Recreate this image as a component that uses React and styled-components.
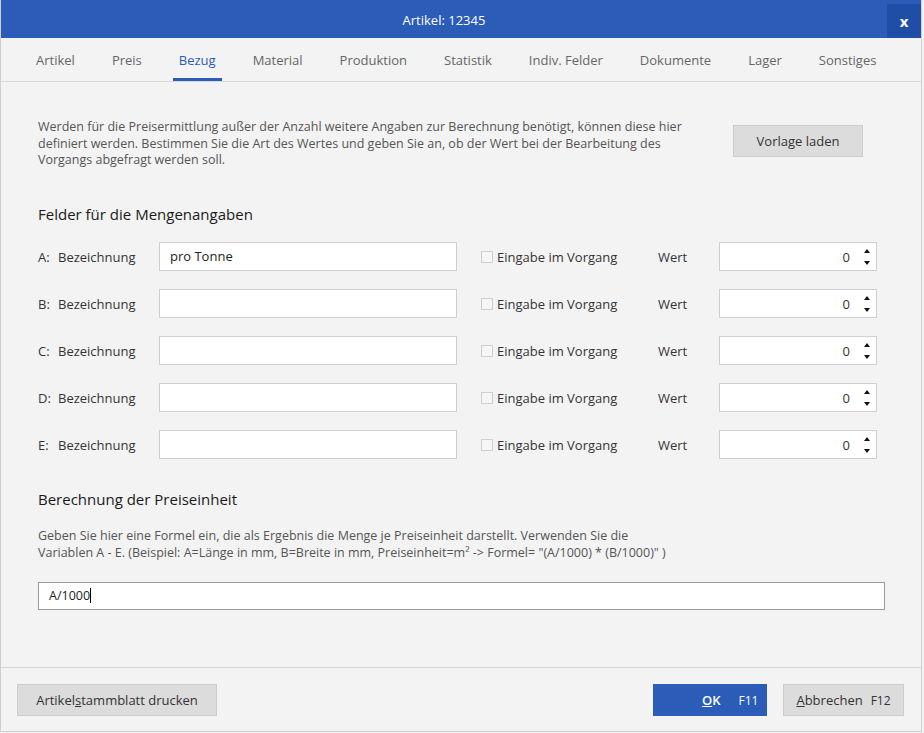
import React from 'react'
import styled, { createGlobalStyle } from 'styled-components'

const GlobalStyle = createGlobalStyle`
    body {
        margin: 0;
        background: #f4f4f4;
        font-family: 'Open Sans', 'Noto Sans', sans-serif;
    }
`;

const tabs = ['Artikel', 'Preis', 'Bezug', 'Material', 'Produktion', 'Statistik', 'Indiv. Felder', 'Dokumente', 'Lager', 'Sonstiges']
const rows = ['A', 'B', 'C', 'D', 'E']

const App = () => {
    return (
        <>
            <GlobalStyle />
            <Dialog>
                <TitleBar>
                    <Title>Artikel: 12345</Title>
                    <CloseButton>x</CloseButton>
                </TitleBar>

                <TabBar>
                    {tabs.map(t => (
                        <Tab key={t} $active={t === 'Bezug'}>{t}</Tab>
                    ))}
                </TabBar>

                <Content>
                    <Intro>
                        <Text>
                            Werden für die Preisermittlung außer der Anzahl weitere Angaben zur Berechnung benötigt, können diese hier
                            definiert werden. Bestimmen Sie die Art des Wertes und geben Sie an, ob der Wert bei der Bearbeitung des
                            Vorgangs abgefragt werden soll.
                        </Text>
                        <GrayButton $width={130}>Vorlage laden</GrayButton>
                    </Intro>

                    <Heading $top={35}>Felder für die Mengenangaben</Heading>

                    <Rows>
                        {rows.map((r, i) => (
                            <Row key={r}>
                                <FieldLabel><span>{r}:</span>Bezeichnung</FieldLabel>
                                <TextBox>{i === 0 ? 'pro Tonne' : ''}</TextBox>
                                <span />
                                <CheckLabel><Check />Eingabe im Vorgang</CheckLabel>
                                <FieldLabel>Wert</FieldLabel>
                                <NumberBox>
                                    <span>0</span>
                                    <Spinner>
                                        <Arrow $up />
                                        <Arrow />
                                    </Spinner>
                                </NumberBox>
                            </Row>
                        ))}
                    </Rows>

                    <Heading $top={30}>Berechnung der Preiseinheit</Heading>
                    <Text $top={19}>
                        Geben Sie hier eine Formel ein, die als Ergebnis die Menge je Preiseinheit darstellt. Verwenden Sie die<br />
                        Variablen A - E. (Beispiel: A=Länge in mm, B=Breite in mm, Preiseinheit=m² -&gt; Formel= "(A/1000) * (B/1000)" )
                    </Text>
                    <FormulaBox>A/1000<Caret /></FormulaBox>
                </Content>

                <Footer>
                    <GrayButton $width={200}>Artikel<u>s</u>tammblatt drucken</GrayButton>
                    <FooterRight>
                        <PrimaryButton><u>O</u>K<Key $gap={18}>F11</Key></PrimaryButton>
                        <GrayButton $width={121}><u>A</u>bbrechen<Key $gap={8}>F12</Key></GrayButton>
                    </FooterRight>
                </Footer>
            </Dialog>
        </>
    )
}

const Dialog = styled.div`
    width: 920px;
    height: 731px;
    display: flex;
    flex-direction: column;
    background: #f3f3f3;
    border: 1px solid #cfcfcf;
    border-top: none;
`;

const TitleBar = styled.div`
    height: 38px;
    display: flex;
    background: #2a5cb8;
    color: #fff;
`;

const Title = styled.div`
    flex: 1;
    text-align: center;
    line-height: 40px;
    font-size: 13px;
`;

const CloseButton = styled.div`
    width: 34px;
    margin-top: 4px;
    background: #1e4ea6;
    text-align: center;
    line-height: 34px;
    font-size: 15px;
    font-weight: 700;
`;

const TabBar = styled.div`
    height: 43px;
    display: flex;
    gap: 37px;
    padding-left: 35px;
    border-bottom: 1px solid #d9d9d9;
`;

const Tab = styled.div`
    display: flex;
    align-items: center;
    padding-top: 1px;
    font-size: 13px;
    color: ${p => p.$active ? '#2a5cb8' : '#666'};
    box-shadow: ${p => p.$active ? 'inset 0 -3px 0 #2a5cb8' : 'none'};
    margin: ${p => p.$active ? '0 -6px' : '0'};
    padding-left: ${p => p.$active ? '6px' : '0'};
    padding-right: ${p => p.$active ? '6px' : '0'};
`;

const Content = styled.div`
    flex: 1;
    padding: 37px 37px 0 37px;
`;

const Intro = styled.div`
    display: flex;
    align-items: flex-start;
    justify-content: space-between;
    padding-right: 21px;

    & > button {
        margin-top: 6px;
    }
`;

const Text = styled.div`
    margin-top: ${p => p.$top || 0}px;
    font-size: 12.5px;
    line-height: 16.7px;
    color: #555;
    max-width: 670px;
`;

const Heading = styled.div`
    margin-top: ${p => p.$top}px;
    font-size: 15px;
    line-height: 20px;
    color: #1a1a1a;
`;

const Rows = styled.div`
    margin-top: 18px;
    display: flex;
    flex-direction: column;
    gap: 18px;
`;

const Row = styled.div`
    display: grid;
    grid-template-columns: 121px 298px 24px 177px 61px 158px;
    height: 29px;
    align-items: center;
`;

const FieldLabel = styled.div`
    font-size: 13px;
    color: #333;

    span {
        display: inline-block;
        width: 20px;
    }
`;

const TextBox = styled.div`
    height: 27px;
    border: 1px solid #cfcfcf;
    background: #fff;
    padding-left: 10px;
    font-size: 13px;
    line-height: 27px;
    color: #222;
`;

const CheckLabel = styled.div`
    display: flex;
    align-items: center;
    gap: 4px;
    font-size: 13px;
    color: #333;
`;

const Check = styled.span`
    width: 10px;
    height: 10px;
    border: 1px solid #cfcfcf;
    background: #f6f6f6;
`;

const NumberBox = styled.div`
    height: 27px;
    border: 1px solid #cfcfcf;
    background: #fff;
    display: flex;
    align-items: center;
    justify-content: flex-end;
    padding-right: 6px;
    gap: 14px;
    font-size: 13px;
    color: #333;
`;

const Spinner = styled.div`
    display: flex;
    flex-direction: column;
    gap: 8px;
`;

const Arrow = styled.span`
    width: 0;
    height: 0;
    border-left: 3px solid transparent;
    border-right: 3px solid transparent;
    border-bottom: ${p => p.$up ? '4px solid #111' : 'none'};
    border-top: ${p => p.$up ? 'none' : '4px solid #111'};
`;

const FormulaBox = styled.div`
    margin-top: 20px;
    width: 835px;
    height: 26px;
    border: 1px solid #9a9a9a;
    background: #fff;
    padding-left: 10px;
    display: flex;
    align-items: center;
    font-size: 12.5px;
    color: #222;
`;

const Caret = styled.span`
    width: 1px;
    height: 15px;
    background: #000;
`;

const Footer = styled.div`
    height: 63px;
    border-top: 1px solid #d4d4d4;
    padding: 0 17px 0 16px;
    display: flex;
    align-items: center;
    justify-content: space-between;
`;

const FooterRight = styled.div`
    display: flex;
    gap: 16px;
`;

const GrayButton = styled.button`
    width: ${p => p.$width}px;
    height: 32px;
    background: #dcdcdc;
    border: 1px solid #cdcdcd;
    font-family: inherit;
    font-size: 13px;
    color: #333;
    padding: 0;
`;

const PrimaryButton = styled.button`
    width: 114px;
    height: 32px;
    background: #2a5cb8;
    border: none;
    color: #fff;
    font-family: inherit;
    font-size: 13px;
    font-weight: 600;
    padding-left: 49px;
    text-align: left;
`;

const Key = styled.span`
    margin-left: ${p => p.$gap}px;
    font-weight: 400;
    font-size: 12px;
`;

export default App;
